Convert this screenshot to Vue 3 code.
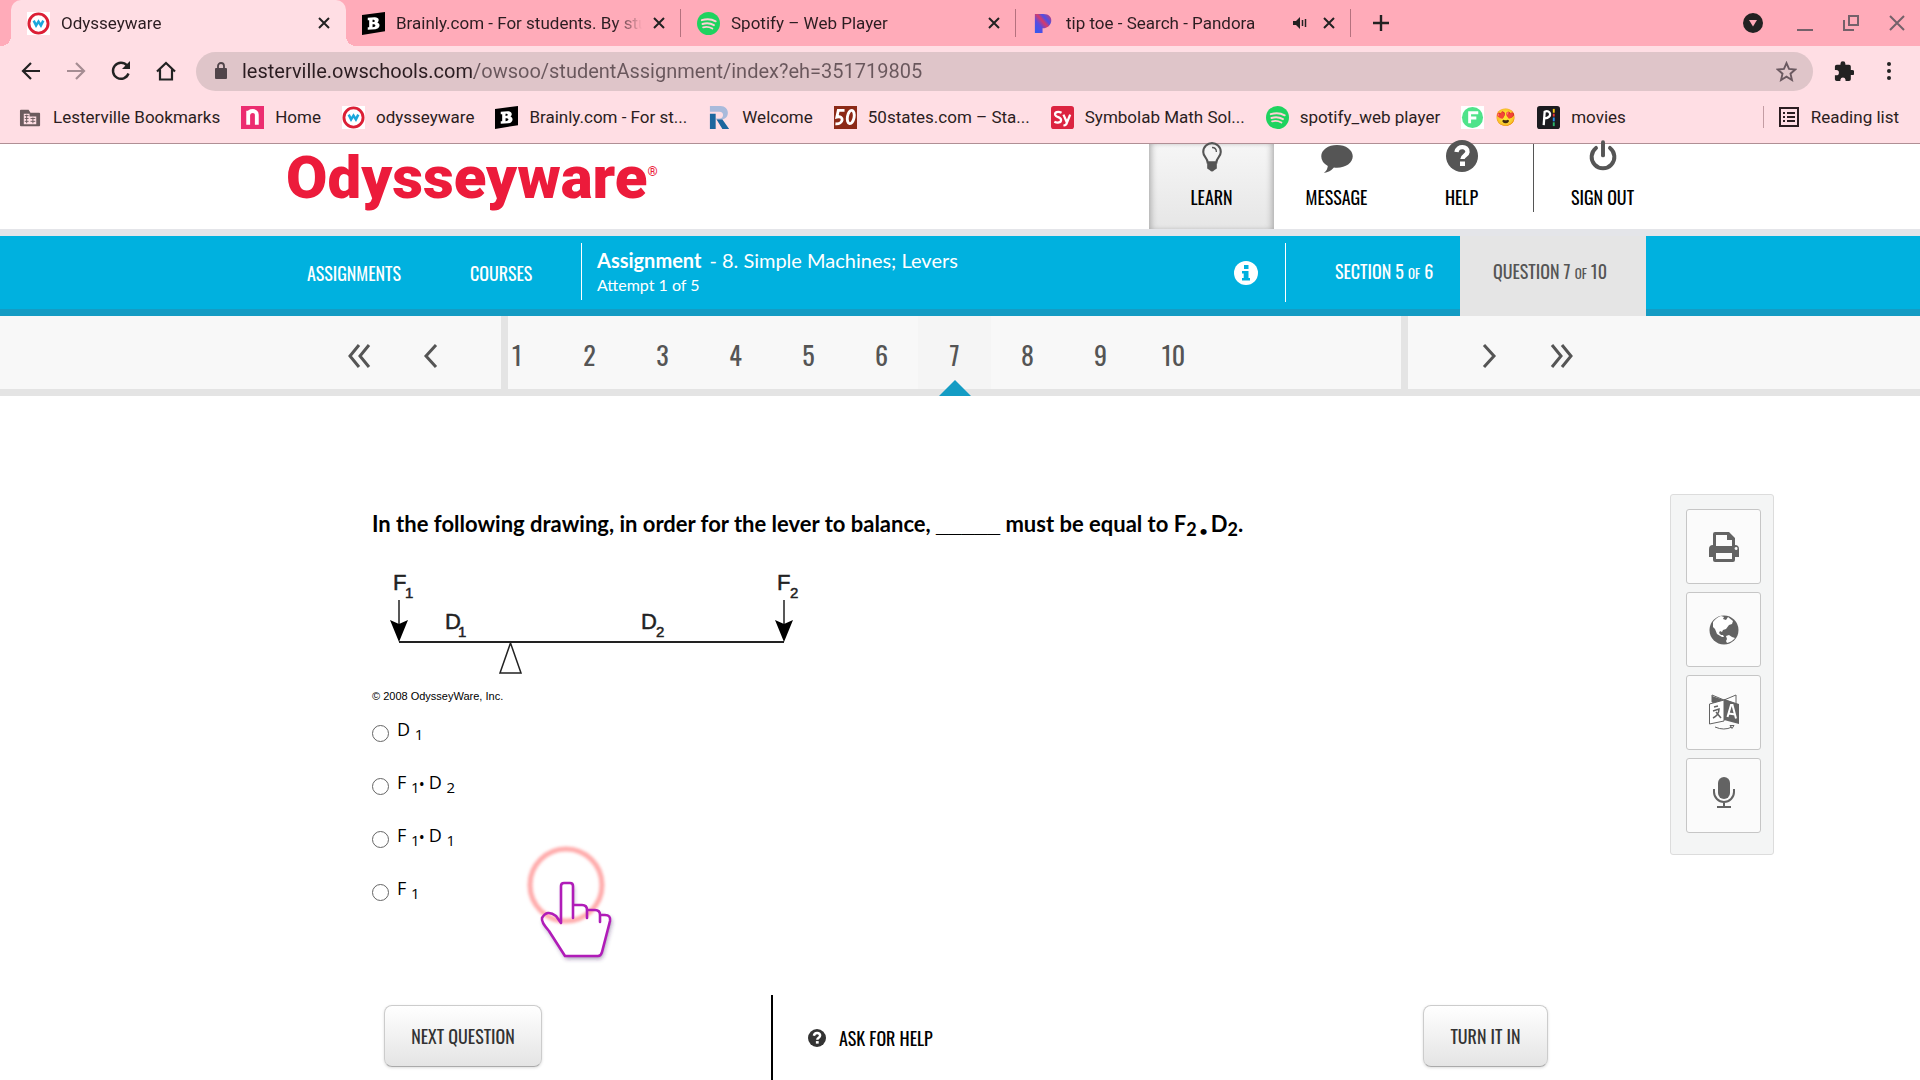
<script setup>
import { ref } from 'vue'

const url = ref('lesterville.owschools.com/owsoo/studentAssignment/index?eh=351719805')

const tabs = [
  { icon: 'ody', title: 'Odysseyware', active: true },
  { icon: 'brainly', title: 'Brainly.com - For students. By stu' },
  { icon: 'spotify', title: 'Spotify – Web Player' },
  { icon: 'pandora', title: 'tip toe - Search - Pandora', sound: true },
]

const bookmarks = [
  { icon: 'folder', title: 'Lesterville Bookmarks' },
  { icon: 'n', title: 'Home' },
  { icon: 'ody', title: 'odysseyware' },
  { icon: 'brainly', title: 'Brainly.com - For st...' },
  { icon: 'r', title: 'Welcome' },
  { icon: 'fifty', title: '50states.com – Sta...' },
  { icon: 'sy', title: 'Symbolab Math Sol...' },
  { icon: 'spotify', title: 'spotify_web player' },
  { icon: 'f', title: '😍' },
  { icon: 'p', title: 'movies' },
]

const questions = [1, 2, 3, 4, 5, 6, 7, 8, 9, 10]
const current = 7

const answers = [
  [['D', '1']],
  [['F', '1'], ['D', '2']],
  [['F', '1'], ['D', '1']],
  [['F', '1']],
]
const picked = ref(null)
</script>

<template>
  <div class="screen">
    <svg class="defs" aria-hidden="true">
      <symbol id="i-ody" viewBox="0 0 24 24">
        <rect width="24" height="24" fill="#fff" />
        <circle cx="12" cy="12" r="10" fill="#fff" stroke="#dc1f35" stroke-width="3" />
        <path d="M7 9l2.500 5 2.500-4 2.500 4L17 9" fill="none" stroke="#1ba7dc" stroke-width="2.600" />
      </symbol>
      <symbol id="i-brainly" viewBox="0 0 24 24">
        <path d="M0 3L24 0V20L0 24z" fill="#000" />
        <path fill-rule="evenodd" fill="#fff" d="M6 6l7-.5c5-.3 5.500 4 3 5.500 4 1.500 2.500 6.500-2 7l-8 .6v-2.600l1.500-.2V8.500L6 8.600zM11 8v2.500c3.500 0 3-2.700 0-2.500zM11 12.800v3c4 0 4-3.400 0-3z" />
      </symbol>
      <symbol id="i-spotify" viewBox="0 0 24 24">
        <circle cx="12" cy="12" r="12" fill="#1ed35f" />
        <path d="M5 8.500q8-2.500 14.500 1.200M5.700 12.500q6.500-2 12 1.200M6.400 16q5-1.400 9.600 1.200" fill="none" stroke="#ffd0d6" stroke-width="2" stroke-linecap="round" />
      </symbol>
      <symbol id="i-pandora" viewBox="0 0 24 24">
        <linearGradient id="pg" x1="0" y1="1" x2="1" y2="0"><stop offset="0" stop-color="#2c5cf0" /><stop offset=".35" stop-color="#5a4be0" /><stop offset=".55" stop-color="#d83a68" /><stop offset=".7" stop-color="#4a50e8" /><stop offset="1" stop-color="#e0385c" /></linearGradient>
        <path d="M3 2h9c12 0 10 15-1 15v5H3z" fill="url(#pg)" />
      </symbol>
      <symbol id="i-folder" viewBox="0 0 24 24">
        <path d="M1 5q0-1 1-1h8l2 3h9q1 0 1 1v12q0 1-1 1H2q-1 0-1-1z" fill="#6b5b5e" />
        <path d="M5 8h6v3h7v8H5z" fill="#ffdee4" />
        <path d="M6 10h4M6 13h4M6 16h4M12 13h5M12 16h5M8 9v9M14.500 12v6" stroke="#6b5b5e" stroke-width="1" />
      </symbol>
      <symbol id="i-n" viewBox="0 0 24 24">
        <rect width="24" height="24" fill="#ec2d70" />
        <path d="M7.500 19.500V5M7.500 9c1-5 9-5 9 0v10.500" fill="none" stroke="#fff" stroke-width="4" />
      </symbol>
      <symbol id="i-r" viewBox="0 0 24 24">
        <path d="M2 0h11c10 0 10 13 2 14l7 10h-6L8 13h4c5 0 5-7 0-7H2z" fill="#a9badb" />
        <path d="M2 8h6v16H2zM9 14h6l7 10h-7z" fill="#1b669e" />
      </symbol>
      <symbol id="i-fifty" viewBox="0 0 24 24">
        <rect width="24" height="24" fill="#8c2a17" />
        <path d="M11 4.500H4.500L3 11.500c8-2 7 8-1.500 7" fill="none" stroke="#fff" stroke-width="3" />
        <ellipse cx="17.500" cy="11.500" rx="3.500" ry="7" fill="none" stroke="#fff" stroke-width="3" transform="rotate(10 17.500 11.500)" />
      </symbol>
      <symbol id="i-sy" viewBox="0 0 24 24">
        <rect width="24" height="24" rx="3" fill="#dc2440" />
        <path d="M11 7C7 5 3.500 6.500 4.500 9.500c1 2.500 6 2 6 5 0 3-4 3.500-7 2M13 9l3.500 8M20 9l-4 10q-1 1.500-3 1" fill="none" stroke="#fff" stroke-width="2.400" />
      </symbol>
      <symbol id="i-f" viewBox="0 0 24 24">
        <rect width="24" height="24" fill="#fff" />
        <circle cx="12" cy="12" r="11" fill="#4fe38a" />
        <path d="M18 7H9v11M9 12.500h7" fill="none" stroke="#fff" stroke-width="3" />
      </symbol>
      <symbol id="i-p" viewBox="0 0 24 24">
        <rect width="24" height="24" rx="3" fill="#1b1b1f" />
        <path d="M7 20l1-14c6-3 9 6 0 7" fill="none" stroke="#fff" stroke-width="2.400" />
        <path d="M17.500 3v4" stroke="#f5c518" stroke-width="2" /><path d="M17.500 8v3" stroke="#e5343a" stroke-width="2" /><path d="M17.500 12v4" stroke="#2a8fe8" stroke-width="2" /><path d="M17.500 17v4" stroke="#2ab56a" stroke-width="2" />
      </symbol>
      <symbol id="i-close" viewBox="0 0 12 12"><path d="M1 1l10 10M11 1L1 11" stroke="currentColor" stroke-width="2" /></symbol>
      <symbol id="i-help" viewBox="0 0 32 32">
        <circle cx="16" cy="16" r="16" fill="currentColor" />
        <path d="M10.500 12c1-7 11.500-6 11 0-.3 3.500-5 3.500-5 7" fill="none" stroke="#fff" stroke-width="4.400" />
        <rect x="14" y="21.500" width="5" height="4.500" fill="#fff" />
      </symbol>
    </svg>

    <header class="browser">
      <div class="tabstrip">
        <div v-for="t in tabs" :key="t.title" class="tab" :class="{ active: t.active }">
          <svg class="fav"><use :href="'#i-' + t.icon" /></svg>
          <span class="tab-title">{{ t.title }}</span>
          <svg v-if="t.sound" class="sound" viewBox="0 0 14 14"><path d="M0 5h3l4-4v12L3 9H0z" fill="#222" /><path d="M9.500 4v6M12.500 3v8" stroke="#222" stroke-width="1.500" /></svg>
          <button class="x" aria-label="Close tab"><svg><use href="#i-close" /></svg></button>
        </div>
        <button class="plus" aria-label="New tab"><svg viewBox="0 0 16 16"><path d="M8 0v16M0 8h16" stroke="#222" stroke-width="2.400" /></svg></button>
        <div class="window-controls">
          <svg class="drop" viewBox="0 0 20 20"><circle cx="10" cy="10" r="10" fill="#222" /><path d="M6 7h8l-4 6.500z" fill="#ffabb9" /></svg>
          <button aria-label="Minimize"><svg viewBox="0 0 16 16"><path d="M0 15h16" stroke="#74616a" stroke-width="2" /></svg></button>
          <button aria-label="Restore"><svg viewBox="0 0 16 16"><path d="M6 1h9v9H6zM1 5v10h10" fill="none" stroke="#74616a" stroke-width="2" /></svg></button>
          <button aria-label="Close"><svg viewBox="0 0 16 16"><path d="M1 1l14 14M15 1L1 15" stroke="#74616a" stroke-width="2" /></svg></button>
        </div>
      </div>

      <div class="toolbar">
        <button aria-label="Back"><svg viewBox="0 0 20 20"><path d="M19 10H2M10 2l-8 8 8 8" fill="none" stroke="#222" stroke-width="2.200" /></svg></button>
        <button aria-label="Forward"><svg viewBox="0 0 20 20"><path d="M1 10h17M10 2l8 8-8 8" fill="none" stroke="#a58c92" stroke-width="2.200" /></svg></button>
        <button aria-label="Reload"><svg viewBox="0 0 20 20"><path d="M17.500 12.500A8 8 0 1 1 16 4.500" fill="none" stroke="#222" stroke-width="2.400" /><path d="M19 0v8h-8z" fill="#222" /></svg></button>
        <button aria-label="Home"><svg viewBox="0 0 20 20"><path d="M1 10.500L10 2l9 8.500M4 8.500V18.500h12V8.500" fill="none" stroke="#222" stroke-width="2.200" /></svg></button>
        <div class="omnibox">
          <svg class="lock" viewBox="0 0 14 18"><rect x="1" y="6" width="12" height="11" rx="1" fill="#504449" /><path d="M4 7V4a3 3 0 0 1 6 0v3" fill="none" stroke="#504449" stroke-width="1.800" /></svg>
          <input v-model="url" type="text" aria-label="Address" />
          <svg class="star" viewBox="0 0 20 20"><path d="M10 2l2.400 5.600 6 .5-4.600 4 1.400 6L10 14.900 4.800 18.100l1.400-6-4.600-4 6-.5z" fill="none" stroke="#6a5960" stroke-width="1.800" /></svg>
        </div>
        <button aria-label="Extensions"><svg viewBox="0 0 22 22"><path d="M20 10h-1.500V6q0-2-2-2h-4V3a2.700 2.700 0 0 0-5.400 0v1H3Q1 4 1 6v4h1.500a2.900 2.900 0 0 1 0 5.800H1V20q0 2 2 2h4v-1.500a2.900 2.900 0 0 1 5.700 0V22h3.800q2 0 2-2v-4.500H20A2.700 2.700 0 0 0 20 10z" fill="#222" /></svg></button>
        <button aria-label="Menu"><svg viewBox="0 0 20 20"><circle cx="10" cy="3" r="2" fill="#222" /><circle cx="10" cy="10" r="2" fill="#222" /><circle cx="10" cy="17" r="2" fill="#222" /></svg></button>
      </div>

      <nav class="bookmarks" aria-label="Bookmarks">
        <a v-for="b in bookmarks" :key="b.title" href="#">
          <svg class="fav"><use :href="'#i-' + b.icon" /></svg><span>{{ b.title }}</span>
        </a>
        <a class="reading" href="#">
          <svg class="list" viewBox="0 0 20 20"><rect x="1" y="1" width="18" height="18" fill="none" stroke="#2b1d21" stroke-width="2" /><path d="M4 6h2M4 10h2M4 14h2M8 6h8M8 10h8M8 14h8" stroke="#2b1d21" stroke-width="2" /></svg>
          <span>Reading list</span>
        </a>
      </nav>
    </header>

    <div class="masthead">
      <div class="wrap">
        <a class="logo" href="#">Odysseyware<sup>®</sup></a>
        <nav class="apps narrow">
          <a class="on" href="#">
            <svg viewBox="0 0 36 32"><path d="M13 21c0-5-5-6-5-12C8 3 13-1 18-1s10 4 10 10c0 6-5 7-5 12z" fill="none" stroke="#555" stroke-width="2.400" /><path d="M18 4q5 0 5 5" fill="none" stroke="#555" stroke-width="1.500" /><path d="M12.500 21h11v7l-3 2q-2.500 3-5 0l-3-2z" fill="#555" /></svg>
            LEARN</a>
          <a href="#">
            <svg viewBox="0 0 36 32"><path d="M18 1c10 0 18 5.500 18 13s-8 13-18 13q-2 0-3.500-.2Q10 32 3 33q4-3 4.500-8Q0 21 0 14C0 6.500 8 1 18 1z" fill="#555" /></svg>
            MESSAGE</a>
          <a href="#"><svg class="round"><use href="#i-help" /></svg>HELP</a>
          <a class="out" href="#">
            <svg viewBox="0 0 36 32"><path d="M10 4.500a13 13 0 1 0 16 0" fill="none" stroke="#555" stroke-width="4.500" stroke-linecap="round" /><path d="M18-2v15" stroke="#555" stroke-width="4.500" stroke-linecap="round" /></svg>
            SIGN OUT</a>
        </nav>
      </div>
    </div>

    <div class="bluebar">
      <div class="wrap">
        <nav class="links narrow"><a href="#">ASSIGNMENTS</a><a href="#">COURSES</a></nav>
        <div class="assignment">
          <div class="name"><b>Assignment</b><span>- 8. Simple Machines; Levers</span></div>
          <div class="attempt">Attempt 1 of 5</div>
        </div>
        <button class="info" aria-label="Information"><svg viewBox="0 0 24 24"><circle cx="12" cy="12" r="12" fill="#fff" /><path d="M10 4h4.500v4H10zM8 10h6.500v7H16v2.500H8V17h1.700v-4.500H8z" fill="#00b1df" /></svg></button>
        <div class="section narrow">SECTION 5 <small>OF</small> 6</div>
        <div class="count narrow">QUESTION 7 <small>OF</small> 10</div>
      </div>
    </div>

    <nav class="pager narrow" aria-label="Questions">
      <div class="wrap">
        <div class="jump back">
          <button aria-label="First"><svg viewBox="0 0 24 24"><path d="M12 1L3 12l9 11M22 1l-9 11 9 11" /></svg></button>
          <button aria-label="Previous"><svg viewBox="0 0 24 24"><path d="M17 1L7 12l10 11" /></svg></button>
        </div>
        <div class="numbers">
          <button v-for="q in questions" :key="q" :class="{ here: q === current }">{{ q }}</button>
        </div>
        <div class="jump next">
          <button aria-label="Next"><svg viewBox="0 0 24 24"><path d="M7 1l10 11L7 23" /></svg></button>
          <button aria-label="Last"><svg viewBox="0 0 24 24"><path d="M2 1l9 11-9 11M12 1l9 11-9 11" /></svg></button>
        </div>
      </div>
    </nav>

    <main>
      <section class="question">
        <h1>In the following drawing, in order for the lever to balance, <span class="blank">_____</span> must be equal to F<sub>2</sub><i>•</i>D<sub>2</sub>.</h1>
        <svg class="lever" viewBox="0 0 440 120" role="img" aria-label="Lever diagram">
          <g fill="none" stroke="#222" stroke-width="2">
            <path d="M27 79H412" />
            <path d="M27 37v30M412 37v30" stroke-width="1.500" />
            <path d="M138.500 80L128 110h21z" stroke-width="1.500" />
          </g>
          <path d="M18 57l9 4 9-4-9 22zM403 57l9 4 9-4-9 22z" fill="#000" />
          <g class="big"><text x="21" y="27">F</text><text x="73" y="66">D</text><text x="269" y="66">D</text><text x="405" y="27">F</text></g>
          <g class="small"><text x="33" y="35">1</text><text x="86" y="74">1</text><text x="284" y="74">2</text><text x="418" y="35">2</text></g>
        </svg>
        <p class="credit">© 2008 OdysseyWare, Inc.</p>
        <div class="answers">
          <label v-for="(a, i) in answers" :key="i">
            <input v-model="picked" type="radio" name="answer" :value="i" />
            <span><template v-for="(p, j) in a" :key="j"><b v-if="j">•</b>{{ j ? ' ' : '' }}{{ p[0] }} <sub>{{ p[1] }}</sub></template></span>
          </label>
        </div>
        <svg class="pointer" viewBox="0 0 100 126" aria-hidden="true">
          <defs><filter id="soft" x="-20%" y="-20%" width="140%" height="140%"><feGaussianBlur stdDeviation="1.500" /></filter>
            <filter id="drop" x="-20%" y="-20%" width="140%" height="150%"><feDropShadow dx="1" dy="3" stdDeviation="2" flood-color="#402060" flood-opacity=".45" /></filter></defs>
          <path filter="url(#drop)" d="M40 116L24 91Q16 82 17 78q5-9 14-2l5 6V46q0-3 3-3h6q3 0 3 3v19h9q5 0 5 5h9q5 0 5 4h5q5 0 5 6l-9 33q-1 3-3 3z" fill="#fff" />
          <circle cx="41" cy="45" r="36" fill="none" stroke="#ff9c9c" stroke-opacity=".85" stroke-width="5" filter="url(#soft)" />
          <path d="M40 116L24 91Q16 82 17 78q5-9 14-2l5 7V46q0-3 3-3h6q3 0 3 3v32V65h9q5 0 5 5v8-8h8q5 0 5 5v7-7h5q6 0 5 6l-8 31q-1 4-4 4z" fill="none" stroke="#b01cb8" stroke-width="2.600" stroke-linejoin="round" />
        </svg>
      </section>

      <aside class="tools" aria-label="Tools">
        <button aria-label="Print"><svg viewBox="0 0 32 32"><path fill-rule="evenodd" fill="#636363" d="M5 14V3q0-2 2-2h14l6 6v7q4 0 4 4v8h-4v3q0 2-2 2H7q-2 0-2-2v-3H1v-8q0-4 4-4zM8 4v11h16V9h-5V4zM8 22v6h16v-6zM28 16a1.500 1.500 0 1 0 .1 3 1.500 1.500 0 0 0-.1-3z" /></svg></button>
        <button aria-label="Web"><svg viewBox="0 0 32 32"><circle cx="16" cy="16" r="14.500" fill="#636363" /><path d="M5 8q4-5 8-6l3 1-1 2 3 1 2-3 5 4-1 3-3 1-3 4-3 1-1 2-2-1-1 2 2 2 2 0 1 2-2 0-5-3-2-5-2-2zM18 22l3-1 3 2 3 1q-3 4-8 5l-1-2 1-2z" fill="#fff" /></svg></button>
        <button aria-label="Translate"><svg class="tall" viewBox="0 0 32 38"><path d="M4 1l12 5L28 1v9L17 6v6L4 8z" fill="#fff" stroke="#636363" stroke-width="1" /><path d="M4 2l12 4v6L4 8z" fill="#636363" /><path d="M1.500 10L16 6v21L1.500 30z" fill="#fff" stroke="#636363" stroke-width="1" /><path d="M16 5l15 5v20l-15-4z" fill="#636363" /><path d="M19.500 23l3.500-12h1.500L28 24.500M21 19.500l6 1" stroke="#fff" stroke-width="2" fill="none" /><path d="M6 13l4-1M5 17l6-2q0 6-6 9M8 18l5 6" stroke="#636363" stroke-width="1.500" fill="none" /><path d="M7 33q9 4 17 0M22 31.500l4 0-2 3z" fill="none" stroke="#636363" stroke-width="1" /></svg></button>
        <button aria-label="Record"><svg class="tall" viewBox="0 0 32 38"><rect x="10" y="0" width="12" height="22" rx="6" fill="#636363" /><path d="M6 12v3a10 10 0 0 0 20 0V12M16 25v5M9 30h14" fill="none" stroke="#636363" stroke-width="2" /></svg></button>
      </aside>
    </main>

    <footer class="narrow">
      <div class="wrap">
        <div class="left"><button class="act next-q">NEXT QUESTION</button></div>
        <a class="ask" href="#"><svg><use href="#i-help" /></svg>ASK FOR HELP</a>
        <button class="act turn">TURN IT IN</button>
      </div>
    </footer>
  </div>
</template>

<style>
body { margin: 0; background: #fff; }
</style>

<style scoped>
* { box-sizing: border-box; }
.screen { min-height: 100vh; display: flex; flex-direction: column; font-family: "Lato", "Liberation Sans", sans-serif; color: #000; overflow: hidden; }
.defs { position: absolute; width: 0; height: 0; }
svg { display: block; flex: none; }
button { border: 0; background: none; padding: 0; font: inherit; color: inherit; display: flex; align-items: center; justify-content: center; }
a { color: inherit; text-decoration: none; }
.narrow { font-family: "Oswald", "Liberation Sans Narrow", sans-serif; }
.wrap { width: 100%; max-width: 1372px; margin: 0 auto; display: flex; }

.browser { font-family: "Roboto", sans-serif; font-size: 17px; color: #2b1d21; background: #ffdee4; border-bottom: 1px solid #b08f95; height: 144px; }
.tabstrip { height: 46px; background: #ffabb9; display: flex; align-items: center; padding-left: 11px; }
.tab { width: 335px; height: 46px; display: flex; align-items: center; padding: 0 16px; position: relative; flex: none; }
.tab.active { background: #ffdee4; border-radius: 10px 10px 0 0; }
.tab.active::before, .tab.active::after { content: ""; position: absolute; bottom: 0; width: 10px; height: 10px; }
.tab.active::before { left: -10px; background: radial-gradient(circle at 0 0, transparent 10px, #ffdee4 10px); }
.tab.active::after { right: -10px; background: radial-gradient(circle at 100% 0, transparent 10px, #ffdee4 10px); }
.tab:not(.active)::after { content: ""; position: absolute; right: 0; width: 1px; height: 28px; background: #b5717e; }
.fav { width: 23px; height: 23px; }
.tab-title { flex: 1; margin: 0 11px; white-space: nowrap; overflow: hidden; mask-image: linear-gradient(90deg, #000 calc(100% - 28px), transparent); }
.sound { width: 14px; height: 14px; margin-right: 16px; }
.x svg { width: 12px; height: 12px; color: #222; }
.plus { width: 16px; height: 16px; margin-left: 22px; }
.plus svg { width: 16px; }
.window-controls { margin-left: auto; display: flex; align-items: center; gap: 30px; padding-right: 15px; }
.window-controls svg { width: 16px; height: 16px; }
.window-controls .drop { width: 20px; height: 20px; margin-right: 4px; }

.toolbar { height: 50px; display: flex; align-items: center; padding: 0 21px; gap: 25px; }
.toolbar button { width: 20px; height: 22px; }
.toolbar button svg { width: 20px; height: 20px; }
.omnibox { flex: 1; height: 39px; border-radius: 20px; background: #dfc5c9; display: flex; align-items: center; padding: 0 16px 0 18px; margin: 0 -4px 0 -5px; }
.lock { width: 14px; height: 18px; margin-right: 14px; }
.omnibox input { flex: 1; border: 0; padding: 0; outline: 0; font: 20px "Roboto", sans-serif; color: transparent; background: linear-gradient(90deg, #2b1d21 232px, #69575c 232px); background-clip: text; }
.star { width: 21px; height: 21px; }
.bookmarks { height: 42px; display: flex; align-items: center; padding: 0 21px 0 19px; gap: 21px; }
.bookmarks a { display: flex; align-items: center; gap: 11px; white-space: nowrap; }
.bookmarks .reading { margin-left: auto; gap: 12px; }
.bookmarks .reading::before { content: ""; width: 1px; height: 22px; background: #c39ca3; margin-right: 3px; }
.list { width: 20px; height: 22px; }

.masthead { border-bottom: 7px solid #e4e5e9; }
.masthead .wrap { height: 85px; justify-content: space-between; }
.logo { font: 900 60px/60px "Roboto", sans-serif; color: #ec1b3b; margin: 4px 0 0 12px; display: flex; align-items: flex-start; }
.logo sup { font-size: 13px; line-height: 48px; font-weight: 700; }
.apps { display: flex; font-size: 18px; margin-right: -25px; }
.apps a { width: 125px; display: flex; flex-direction: column; align-items: center; line-height: 24px; gap: 13px; height: 85px; padding: 0; }
.apps svg { width: 36px; height: 28px; overflow: visible; }
.apps .round { color: #555; width: 32px; height: 32px; margin-top: -4px; overflow: hidden; }
.apps .on { background: linear-gradient(#f6f6f6, #e6e6e6); box-shadow: inset 5px 0 6px -3px #aaa, inset -5px 0 6px -3px #aaa; }
.apps .out { width: 138px; border-left: 1px solid #555; height: 68px; margin-left: 9px; }

.bluebar { background: #00b1df; color: #fff; border-bottom: 7px solid #149cc4; }
.bluebar .wrap { height: 73px; }
.links { width: 307px; display: flex; gap: 69px; padding-left: 33px; font-size: 18px; line-height: 74px; }
.assignment { border-left: 1px solid #fff; height: 57px; margin-top: 7px; padding-left: 15px; flex: 1; }
.name { font-size: 20px; line-height: 24px; padding-top: 5px; display: flex; gap: 8px; }
.attempt { font-size: 16px; line-height: 26px; }
.info { width: 24px; margin-right: 27px; }
.info svg { width: 24px; height: 24px; }
.section { border-left: 1px solid #fff; height: 59px; margin-top: 7px; width: 175px; padding-left: 49px; line-height: 57px; font-size: 18px; white-space: nowrap; }
.count { width: 186px; height: 80px; margin-bottom: -7px; background: #e5e5e5; color: #555; padding-left: 33px; line-height: 71px; font-size: 18px; white-space: nowrap; z-index: 1; }
small { font-size: 13px; }

.pager { background: #f8f8f8; border-bottom: 7px solid #e4e4e4; color: #555; }
.pager .wrap { height: 73px; }
.jump { display: flex; align-items: center; padding-top: 6px; }
.jump svg { width: 24px; height: 24px; fill: none; stroke: #555; stroke-width: 3; }
.back { width: 234px; border-right: 7px solid #e4e4e4; padding-left: 73px; gap: 48px; }
.next { width: 245px; border-left: 7px solid #e4e4e4; padding-left: 69px; gap: 49px; }
.numbers { flex: 1; display: flex; font-size: 26px; }
.numbers button { width: 73px; padding-top: 4px; position: relative; }
.numbers button:first-child { width: 45px; justify-content: flex-start; padding-left: 4px; }
.numbers .here { background: #f5f5f5; }
.here::after { content: ""; position: absolute; bottom: -7px; left: 21px; border: 16px solid transparent; border-top: 0; border-bottom-color: #149cc4; }

main { display: flex; justify-content: space-between; align-items: flex-start; padding: 98px calc(50% - 814px) 0 calc(50% - 588px); }
.question { position: relative; padding-top: 14px; }
h1 { font-size: 22px; line-height: 32px; font-weight: 700; margin: 0; white-space: nowrap; }
h1 sub { font-size: 18px; line-height: 0; vertical-align: -4px; }
h1 i { font: 700 14px/0 "Lato", sans-serif; margin: 0 3px; vertical-align: -4px; }
.blank { font: 700 23px/0 "Liberation Sans", sans-serif; }
.lever { width: 440px; height: 120px; margin-top: 23px; font-family: "Liberation Sans", sans-serif; fill: #222; stroke: #222; stroke-width: 0; }
.big { font-size: 22px; stroke-width: 0.5; }
.small { font-size: 15px; stroke-width: 0.5; }
.credit { font: 11px/14px "Liberation Sans", sans-serif; margin: 6px 0 0; }
.answers { font: 18px/24px "Open Sans", "Noto Sans", sans-serif; display: flex; flex-direction: column; gap: 29px; margin-top: 14px; }
.answers label { display: flex; gap: 8px; align-items: flex-start; height: 24px; }
.answers input { appearance: none; width: 17px; height: 17px; margin: 8px 0 0; border: 1px solid #666; border-radius: 50%; background: #fff; }
.answers input:checked { box-shadow: inset 0 0 0 4px #fff; background: #149cc4; }
.answers sub { font-size: 15px; line-height: 0; vertical-align: -4px; }
.answers b { font-size: 12px; line-height: 0; }
.pointer { position: absolute; left: 153px; top: 346px; width: 100px; height: 126px; overflow: visible; }

.tools { width: 104px; background: #f4f5f5; border: 1px solid #dcdcdc; border-radius: 3px; padding: 14px 12px 21px 15px; display: flex; flex-direction: column; gap: 8px; }
.tools button { height: 75px; background: #fbfbfb; border: 1px solid #c6c6c6; border-radius: 3px; }
.tools svg { width: 32px; height: 32px; }
.tools .tall { height: 38px; }

footer { flex: 1; display: flex; margin-top: 95px; min-height: 85px; }
footer .wrap { align-items: flex-start; }
.left { width: 497px; padding: 10px 0 0 110px; }
.act { height: 62px; border: 1px solid #ccc; border-bottom-color: #aaa; border-radius: 8px; background: linear-gradient(#fff, #e4e4e4); color: #333; font-size: 18px; box-shadow: 0 1px 3px #ddd; }
.next-q { width: 158px; }
.turn { width: 125px; margin: 10px 98px 0 auto; }
.ask { display: flex; gap: 13px; align-items: center; align-self: stretch; border-left: 2px solid #000; padding-left: 35px; font-size: 18px; }
.ask svg { width: 18px; height: 18px; color: #333; }
</style>
